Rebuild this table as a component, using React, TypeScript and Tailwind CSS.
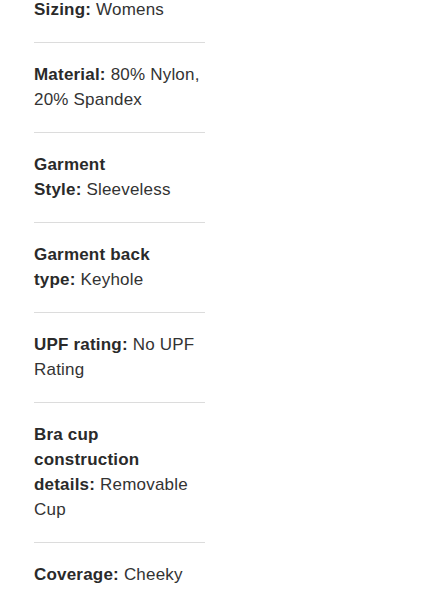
const specs: { label: string; value: string }[] = [
  { label: "Sizing:", value: "Womens" },
  { label: "Material:", value: "80% Nylon, 20% Spandex" },
  { label: "Garment Style:", value: "Sleeveless" },
  { label: "Garment back type:", value: "Keyhole" },
  { label: "UPF rating:", value: "No UPF Rating" },
  { label: "Bra cup construction details:", value: "Removable Cup" },
  { label: "Coverage:", value: "Cheeky" },
];

export default function App() {
  return (
    <div className="h-[600px] w-full overflow-hidden bg-white font-['Liberation_Sans',Arial,sans-serif] text-[17px] leading-[25px] tracking-[0.2px] text-[#333]">
      <ul className="-mt-[22px] ml-[34px] w-[171px]">
        {specs.map((s) => (
          <li key={s.label} className="border-b border-[#dcdcdc] pt-[19px] pb-5">
            {/* label and first word of value stay together */}
            <span className="font-bold text-[#2a2a2a]">{s.label}</span>
            {"\u00a0"}
            {s.value}
          </li>
        ))}
      </ul>
    </div>
  );
}
